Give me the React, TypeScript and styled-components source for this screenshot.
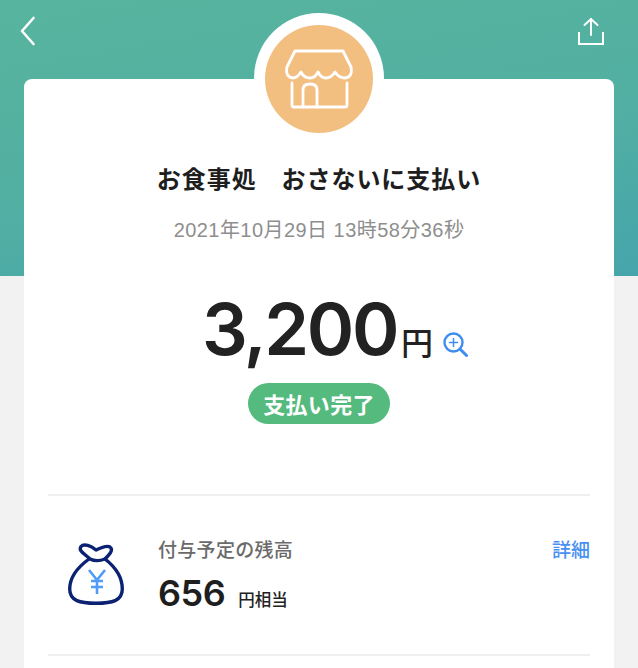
import styled, { createGlobalStyle } from "styled-components";

const GlobalStyle = createGlobalStyle`
  html, body {
    margin: 0;
    height: 100%;
    overflow: hidden;
    background: #f2f2f2;
    font-family: "Noto Sans CJK JP", "Liberation Sans", sans-serif;
  }
`;

const Page = styled.div`
  position: relative;
  height: 668px;
  overflow: hidden;
`;

const Header = styled.header`
  height: 276px;
  margin-bottom: -197px;
  padding: 14px 34px 0 19px;
  box-sizing: border-box;
  display: flex;
  justify-content: space-between;
  align-items: flex-start;
  background: linear-gradient(170deg, #57b49e 0%, #52b0a2 50%, #46a5ab 100%);
`;

const IconButton = styled.div<{ $top?: number }>`
  display: flex;
  margin-top: ${(p) => p.$top ?? 0}px;
`;

const Card = styled.main`
  position: relative;
  margin: 0 24px;
  height: 640px;
  padding: 0 24px;
  background: #fff;
  border-radius: 8px;
  display: flex;
  flex-direction: column;
  align-items: center;
`;

const Avatar = styled.div`
  position: absolute;
  top: -66px;
  left: 230px;
  width: 130px;
  height: 130px;
  border-radius: 50%;
  background: #fff;
  display: flex;
  align-items: center;
  justify-content: center;
`;

const AvatarInner = styled.div`
  margin-top: 2px;
  width: 108px;
  height: 108px;
  border-radius: 50%;
  background: #f2bf80;
  display: flex;
  align-items: center;
  justify-content: center;
`;

const Title = styled.h1`
  margin: 81px 0 0;
  font-size: 24px;
  line-height: 36px;
  font-weight: 700;
  letter-spacing: 0.95px;
  color: #1e1e1e;
  white-space: pre;
`;

const DateText = styled.div`
  margin-top: 21px;
  font-family: "Liberation Sans", "Noto Sans CJK JP", sans-serif;
  font-size: 20px;
  line-height: 26px;
  color: #8e8e8e;
  letter-spacing: 0.45px;
`;

const AmountRow = styled.div`
  margin-top: 42px;
  margin-left: 32px;
  display: flex;
  align-items: baseline;
  height: 88px;
`;

const Amount = styled.span`
  font-family: Inter, "Liberation Sans", sans-serif;
  font-size: 72px;
  line-height: 88px;
  font-weight: 600;
  letter-spacing: -2.4px;
  color: #222;
`;

const Yen = styled.span`
  margin-left: 4px;
  font-size: 32px;
  font-weight: 500;
  color: #222;
`;

const ZoomIcon = styled.svg`
  margin-left: 10px;
  align-self: flex-end;
  margin-bottom: 16px;
`;

const StatusPill = styled.div`
  margin-top: 10px;
  width: 142px;
  height: 41px;
  border-radius: 21px;
  background: #55ba7d;
  color: #fff;
  font-size: 22px;
  font-weight: 700;
  line-height: 41px;
  text-align: center;
  letter-spacing: 0.3px;
`;

const Divider = styled.hr<{ $top: number }>`
  align-self: stretch;
  margin: ${(p) => p.$top}px 0 0;
  border: 0;
  height: 2px;
  background: #efefef;
`;

const Row = styled.section`
  align-self: stretch;
  height: 158px;
  display: flex;
  align-items: flex-start;
`;

const BagWrap = styled.div`
  width: 110px;
  padding: 47px 0 0 20px;
  box-sizing: border-box;
  flex: none;
`;

const RowBody = styled.div`
  flex: 1;
  padding-top: 40px;
`;

const RowLabel = styled.div`
  font-size: 19px;
  line-height: 26px;
  font-weight: 500;
  letter-spacing: 0.3px;
  color: #6a6a6a;
`;

const Points = styled.div`
  margin-top: 9px;
  display: flex;
  align-items: baseline;
`;

const PointsValue = styled.span`
  font-family: Inter, "Liberation Sans", sans-serif;
  font-size: 36px;
  line-height: 44px;
  font-weight: 600;
  letter-spacing: -0.5px;
  color: #1e1e1e;
`;

const PointsUnit = styled.span`
  margin-left: 13px;
  font-size: 16.5px;
  font-weight: 500;
  color: #222;
`;

const DetailLink = styled.a`
  padding-top: 40px;
  font-size: 19px;
  line-height: 26px;
  font-weight: 500;
  color: #4a90f0;
`;

export default function App() {
  return (
    <Page>
      <GlobalStyle />
      <Header>
        <IconButton>
          <svg width="20" height="32" viewBox="0 0 20 32" fill="none" stroke="#fff" strokeWidth="2.6" strokeLinecap="round" strokeLinejoin="round">
            <path d="M14.5 4 L3 17 L14.5 30" />
          </svg>
        </IconButton>
        <IconButton $top={3}>
          <svg width="26" height="28" viewBox="0 0 26 28" fill="none" stroke="#fff" strokeWidth="2" strokeLinecap="round">
            <path d="M13 2 V18" />
            <path d="M6.500 8 L13 2 L19.500 8" />
            <path d="M1 15 V27 H25 V15" strokeLinecap="butt" />
          </svg>
        </IconButton>
      </Header>
      <Card>
        <Avatar>
          <AvatarInner>
            <svg width="68" height="68" viewBox="0 0 68 68" fill="none" stroke="#fff" strokeWidth="2.8" strokeLinecap="round" strokeLinejoin="round">
              <path d="M10 6 H58 L66 22 Q68 32 60 33 Q54 33 50 27 Q46 33 41 33 Q36 33 33 27 Q30 33 25 33 Q19 33 16 27 Q12 33 8 33 Q0 32 2 22 Z" />
              <path d="M7 38 V60 Q7 62 9 62 H60 Q62 62 62 60 V38" />
              <path d="M18 62 V45 Q18 39 25 39 Q32 39 32 45 V62" />
            </svg>
          </AvatarInner>
        </Avatar>
        <Title>お食事処　おさないに支払い</Title>
        <DateText>2021年10月29日 13時58分36秒</DateText>
        <AmountRow>
          <Amount>3,200</Amount>
          <Yen>円</Yen>
          <ZoomIcon width="25" height="25" viewBox="0 0 25 25" fill="none" stroke="#3f8cf0" strokeLinecap="round">
            <circle cx="10.500" cy="10.500" r="9" strokeWidth="2.400" />
            <path d="M17 17 L23.500 23.500" strokeWidth="3" />
            <path d="M10.500 6.500 V14.500 M6.500 10.500 H14.500" strokeWidth="1.500" />
          </ZoomIcon>
        </AmountRow>
        <StatusPill>支払い完了</StatusPill>
        <Divider $top={70} />
        <Row>
          <BagWrap>
            <svg width="56" height="62" viewBox="0 0 56 62" fill="none">
              <path d="M22 16 C17 11 10 8 13 3.500 C16 0 23 3 28 7 C32 5 39 2 42 4 C46 7 41 12 37 16 C32 18 26 18 22 16 Z" stroke="#0b2273" strokeWidth="3.400" strokeLinejoin="round" />
              <path d="M21 16 C10 24 1.700 33 1.700 46 C1.700 58 12 60.300 28 60.300 C44 60.300 54.300 58 54.300 46 C54.300 33 46 23 37 16" stroke="#0b2273" strokeWidth="3.400" strokeLinecap="round" />
              <path d="M21 27 L29 37 L37 27 M29 37 V51 M23 38 H35 M23 44 H35" stroke="#4f9bf5" strokeWidth="2.600" />
            </svg>
          </BagWrap>
          <RowBody>
            <RowLabel>付与予定の残高</RowLabel>
            <Points>
              <PointsValue>656</PointsValue>
              <PointsUnit>円相当</PointsUnit>
            </Points>
          </RowBody>
          <DetailLink>詳細</DetailLink>
        </Row>
        <Divider $top={0} />
      </Card>
    </Page>
  );
}
